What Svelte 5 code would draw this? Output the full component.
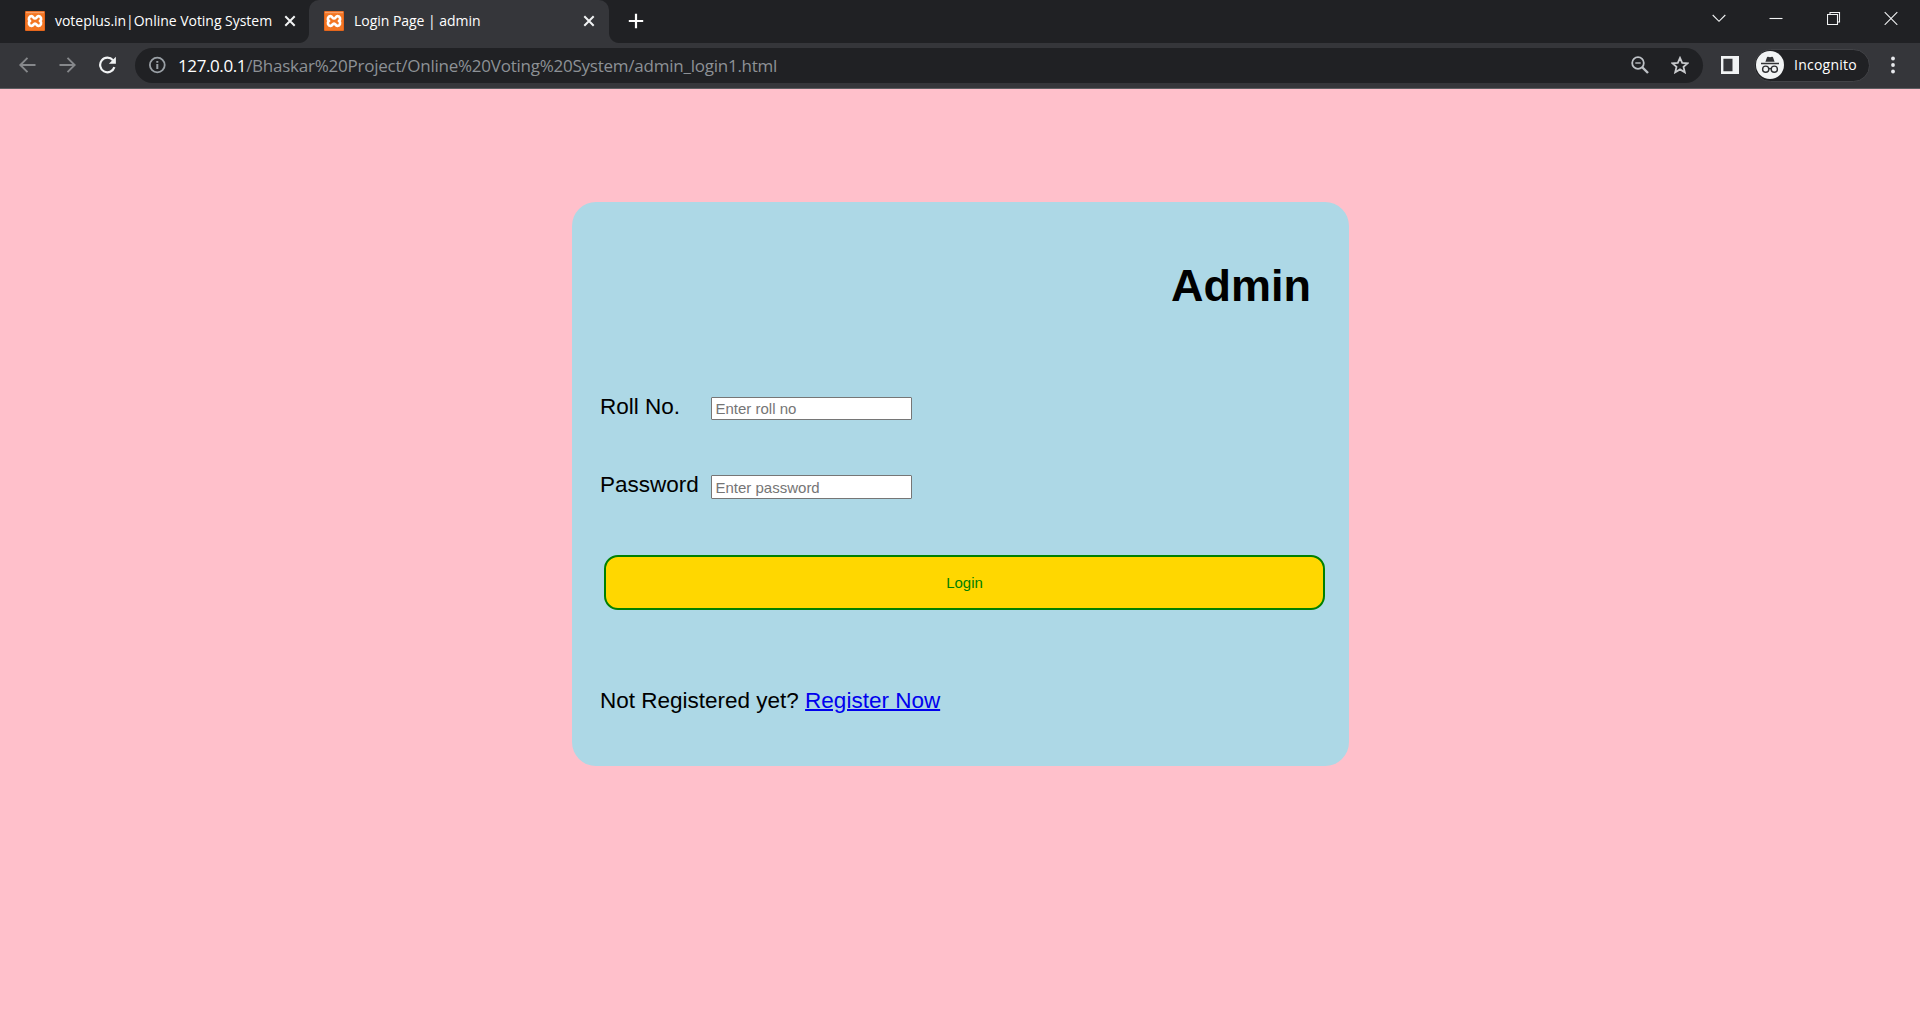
<script>
  const tabs = [
    { title: 'voteplus.in|Online Voting System', kind: 'idle' },
    { title: 'Login Page | admin', kind: 'active' }
  ];
  const fields = [
    { id: 'roll', label: 'Roll No.', hint: 'Enter roll no', type: 'text' },
    { id: 'password', label: 'Password', hint: 'Enter password', type: 'password' }
  ];
</script>

<div class="window">
  <header class="tabstrip">
    {#each tabs as tab}
      <div class="tab {tab.kind}">
        <svg class="favicon" width="20" height="20" viewBox="0 0 20 20">
          <rect width="20" height="20" rx="1" fill="#e5661c" />
          <rect x="1" y="1" width="18" height="18" fill="#f37623" />
          <rect x="1" y=".8" width="18" height="1.4" fill="#f7a069" />
          <path d="M6.4 5.2C4 5.2 3 8 4.8 9.9C3 11.8 4 15 6.6 14.9C8.6 14.7 8.4 12.6 10 12.6S11.4 14.7 13.4 14.9C16 15 17 11.8 15.2 9.9C17 8 16 5.2 13.6 5.2C11.5 5.2 11.8 7.5 10 7.5S8.5 5.2 6.4 5.2Z" fill="none" stroke="#fff" stroke-width="2.7" stroke-linejoin="round" />
          <path d="M4 9.9H6.2M13.8 9.9H16" stroke="#fff" stroke-width="2" />
        </svg>
        <span class="title">{tab.title}</span>
        <svg class="close" width="12" height="12" viewBox="0 0 12 12"><path d="M1.3 1.3L10.7 10.7M10.7 1.3L1.3 10.7" stroke="#f1f3f4" stroke-width="2" /></svg>
      </div>
    {/each}
    <svg class="plus" width="16" height="16" viewBox="0 0 16 16"><path d="M8 .8V15.2M.8 8H15.2" stroke="#fff" stroke-width="2.2" /></svg>
    <div class="controls">
      <svg width="14" height="14" viewBox="0 0 14 14"><path d="M.7 4L7 10.3L13.3 4" /></svg>
      <svg width="14" height="14" viewBox="0 0 14 14"><path d="M.5 7.5H13.5" /></svg>
      <svg width="14" height="14" viewBox="0 0 14 14"><path d="M.5 3.5H10.5V13.5H.5ZM3 3.5V1.5H12.5V11H10.5" /></svg>
      <svg width="14" height="14" viewBox="0 0 14 14"><path d="M.7 1.2L13.3 13.8M13.3 1.2L.7 13.8" /></svg>
    </div>
  </header>

  <div class="toolbar">
    <nav class="nav">
      <svg width="18" height="18" viewBox="0 0 18 18"><path d="M17.5 9H2.5M9.5 1.8L2.3 9L9.5 16.2" fill="none" stroke="#86888b" stroke-width="1.9" /></svg>
      <svg width="18" height="18" viewBox="0 0 18 18"><path d="M1.5 9H16.5M9.5 1.8L16.7 9L9.5 16.2" fill="none" stroke="#86888b" stroke-width="1.9" /></svg>
      <svg width="18" height="18" viewBox="0 0 18 18"><path d="M15 4.2A7.3 7.3 0 1 0 16.4 11.2" fill="none" stroke="#f1f3f4" stroke-width="2.2" /><path d="M17.9 .8V7.8H10.9Z" fill="#f1f3f4" /></svg>
    </nav>
    <div class="address">
      <svg class="info" width="18" height="18" viewBox="0 0 18 18"><circle cx="9.3" cy="9" r="7.4" fill="none" stroke="#9aa0a6" stroke-width="1.8" /><path d="M9.3 8V13M9.3 5V6.8" stroke="#9aa0a6" stroke-width="2" /></svg>
      <span class="url"><span class="host">127.0.0.1</span><span class="path">/Bhaskar%20Project/Online%20Voting%20System/admin_login1.html</span></span>
      <svg class="zoom" width="18" height="18" viewBox="0 0 18 18"><circle cx="7" cy="7" r="5.8" fill="none" stroke="#bdc1c6" stroke-width="1.8" /><path d="M11 11L17 17" stroke="#bdc1c6" stroke-width="2.4" /><path d="M4.3 7H9.7" stroke="#bdc1c6" stroke-width="1.4" /></svg>
      <svg class="star" width="18" height="18" viewBox="0 0 18 18"><path d="M9 1.9L11.2 6.8L16.7 7.3L12.5 10.9L13.8 16.3L9 13.4L4.2 16.3L5.5 10.9L1.3 7.3L6.8 6.8Z" fill="none" stroke="#c8cacd" stroke-width="1.8" /></svg>
    </div>
    <svg class="panel" width="18" height="18" viewBox="0 0 18 18"><path fill-rule="evenodd" d="M0 0H18V18H0ZM2.4 2.8V15.2H11.5V2.8Z" fill="#f1f3f4" /></svg>
    <div class="incognito">
      <svg width="28" height="28" viewBox="0 0 28 28"><circle cx="14" cy="14" r="14" fill="#f1f3f4" /><path d="M9.4 10.8L11 6.2Q11.3 5.6 12 5.8L14 6.3L16 5.8Q16.7 5.6 17 6.2L18.6 10.8Z" fill="#303134" /><path d="M5 12.5H23" stroke="#303134" stroke-width="1.5" /><g fill="none" stroke="#303134" stroke-width="1.4"><circle cx="9.7" cy="18.2" r="3.1" /><circle cx="18.3" cy="18.2" r="3.1" /><path d="M12.8 17.9Q14 17 15.2 17.9" /></g></svg>
      <span>Incognito</span>
    </div>
    <svg class="dots" width="4" height="18" viewBox="0 0 4 18" fill="#e8eaed"><circle cx="2" cy="2.5" r="1.9" /><circle cx="2" cy="9" r="1.9" /><circle cx="2" cy="15.5" r="1.9" /></svg>
  </div>

  <main class="page">
    <form class="card">
      <h1>Admin</h1>
      {#each fields as field}
        <div class="row">
          <label for={field.id}>{field.label}</label>
          <input id={field.id} class={field.id} type={field.type} placeholder={field.hint} />
        </div>
      {/each}
      <button type="button">Login</button>
      <p>Not Registered yet? <a href="#register">Register Now</a></p>
    </form>
  </main>
</div>

<style>
  :global(body) { margin: 0; background: #ffc0cb; }
  .window { width: 1920px; height: 1014px; display: flex; flex-direction: column; overflow: hidden; font-family: "Open Sans", "Noto Sans", sans-serif; }
  svg { display: block; flex: none; }
  .tabstrip { height: 43px; flex: none; display: flex; align-items: flex-start; background: #202124; }
  .tab { box-sizing: border-box; height: 43px; display: flex; align-items: center; color: #fff; font-size: 14px; white-space: nowrap; }
  .tab.idle { width: 309px; padding: 0 13px 1px 25px; }
  .tab.active { position: relative; width: 300px; padding: 0 14px 1px 15px; background: #35363a; border-radius: 10px 10px 0 0; }
  .tab.active::before, .tab.active::after { content: ""; position: absolute; bottom: 0; width: 10px; height: 10px; }
  .tab.active::before { left: -10px; background: radial-gradient(circle at 0 0, #202124 9.5px, #35363a 10.5px); }
  .tab.active::after { right: -10px; background: radial-gradient(circle at 100% 0, #202124 9.5px, #35363a 10.5px); }
  .title { margin-left: 10px; line-height: 20px; letter-spacing: -0.03px; }
  .close { margin-left: auto; }
  .plus { margin: 13px 0 0 19px; }
  .controls { margin: 11px 22px 0 auto; display: flex; gap: 43.5px; fill: none; stroke: #f1f3f4; stroke-width: 1.1; }
  .toolbar { box-sizing: border-box; height: 46px; flex: none; display: flex; align-items: center; background: #35363a; border-bottom: 1px solid #5d5e61; padding: 0 25.5px 1px 18px; }
  .nav { display: flex; gap: 22px; width: 117px; }
  .address { box-sizing: border-box; width: 1568px; height: 35px; border-radius: 18px; background: #202124; display: flex; align-items: center; padding: 0 14px 0 13px; }
  .url { margin: 1px 0 0 12px; padding-top: 1px; font-size: 17px; line-height: 24px; letter-spacing: -0.24px; white-space: nowrap; color: #8d9196; }
  .host { color: #fff; letter-spacing: -0.4px; }
  .zoom { margin-left: auto; }
  .star { margin-left: 22px; }
  .panel { margin-left: 18px; }
  .incognito { box-sizing: border-box; width: 116px; height: 33px; margin-left: 15px; border: 1px solid #424347; border-radius: 17px; background: #202124; color: #fff; display: flex; align-items: center; padding-left: 1px; gap: 10px; font-size: 14px; letter-spacing: 0.25px; }
  .incognito span { padding-bottom: 2px; }
  .dots { margin-left: auto; }

  .page { flex: 1; display: flex; justify-content: center; align-items: flex-start; padding-top: 113px; background: #ffc0cb; font-family: "Liberation Sans", Arial, sans-serif; }
  .card { box-sizing: border-box; width: 777px; height: 564px; margin-left: 1px; padding: 58px 24px 0 28px; border-radius: 24px; background: #add8e6; color: #000; font-size: 22.5px; line-height: 26px; }
  h1 { margin: 0 14px 82px 0; text-align: right; font-size: 45px; line-height: 52px; }
  .row { display: flex; height: 26px; margin-bottom: 52px; }
  label { width: 111px; }
  input { box-sizing: border-box; width: 201px; height: 23px; margin: 3px 0 0; padding: 1px 3.5px; border: 1px solid #767676; border-radius: 1px; background: #fff; font: 15px "Liberation Sans", Arial, sans-serif; }
  input.password { height: 24px; }
  input::placeholder { color: #757575; opacity: 1; }
  button { display: block; box-sizing: border-box; width: 721px; height: 55px; margin: 57px 0 0 4px; padding: 0; border: 2px solid #008000; border-radius: 14px; background: #ffd700; color: #008000; font: 15px "Liberation Sans", Arial, sans-serif; }
  p { margin: 78px 0 0; }
  a { color: #00e; text-decoration-thickness: 2px; }
</style>
